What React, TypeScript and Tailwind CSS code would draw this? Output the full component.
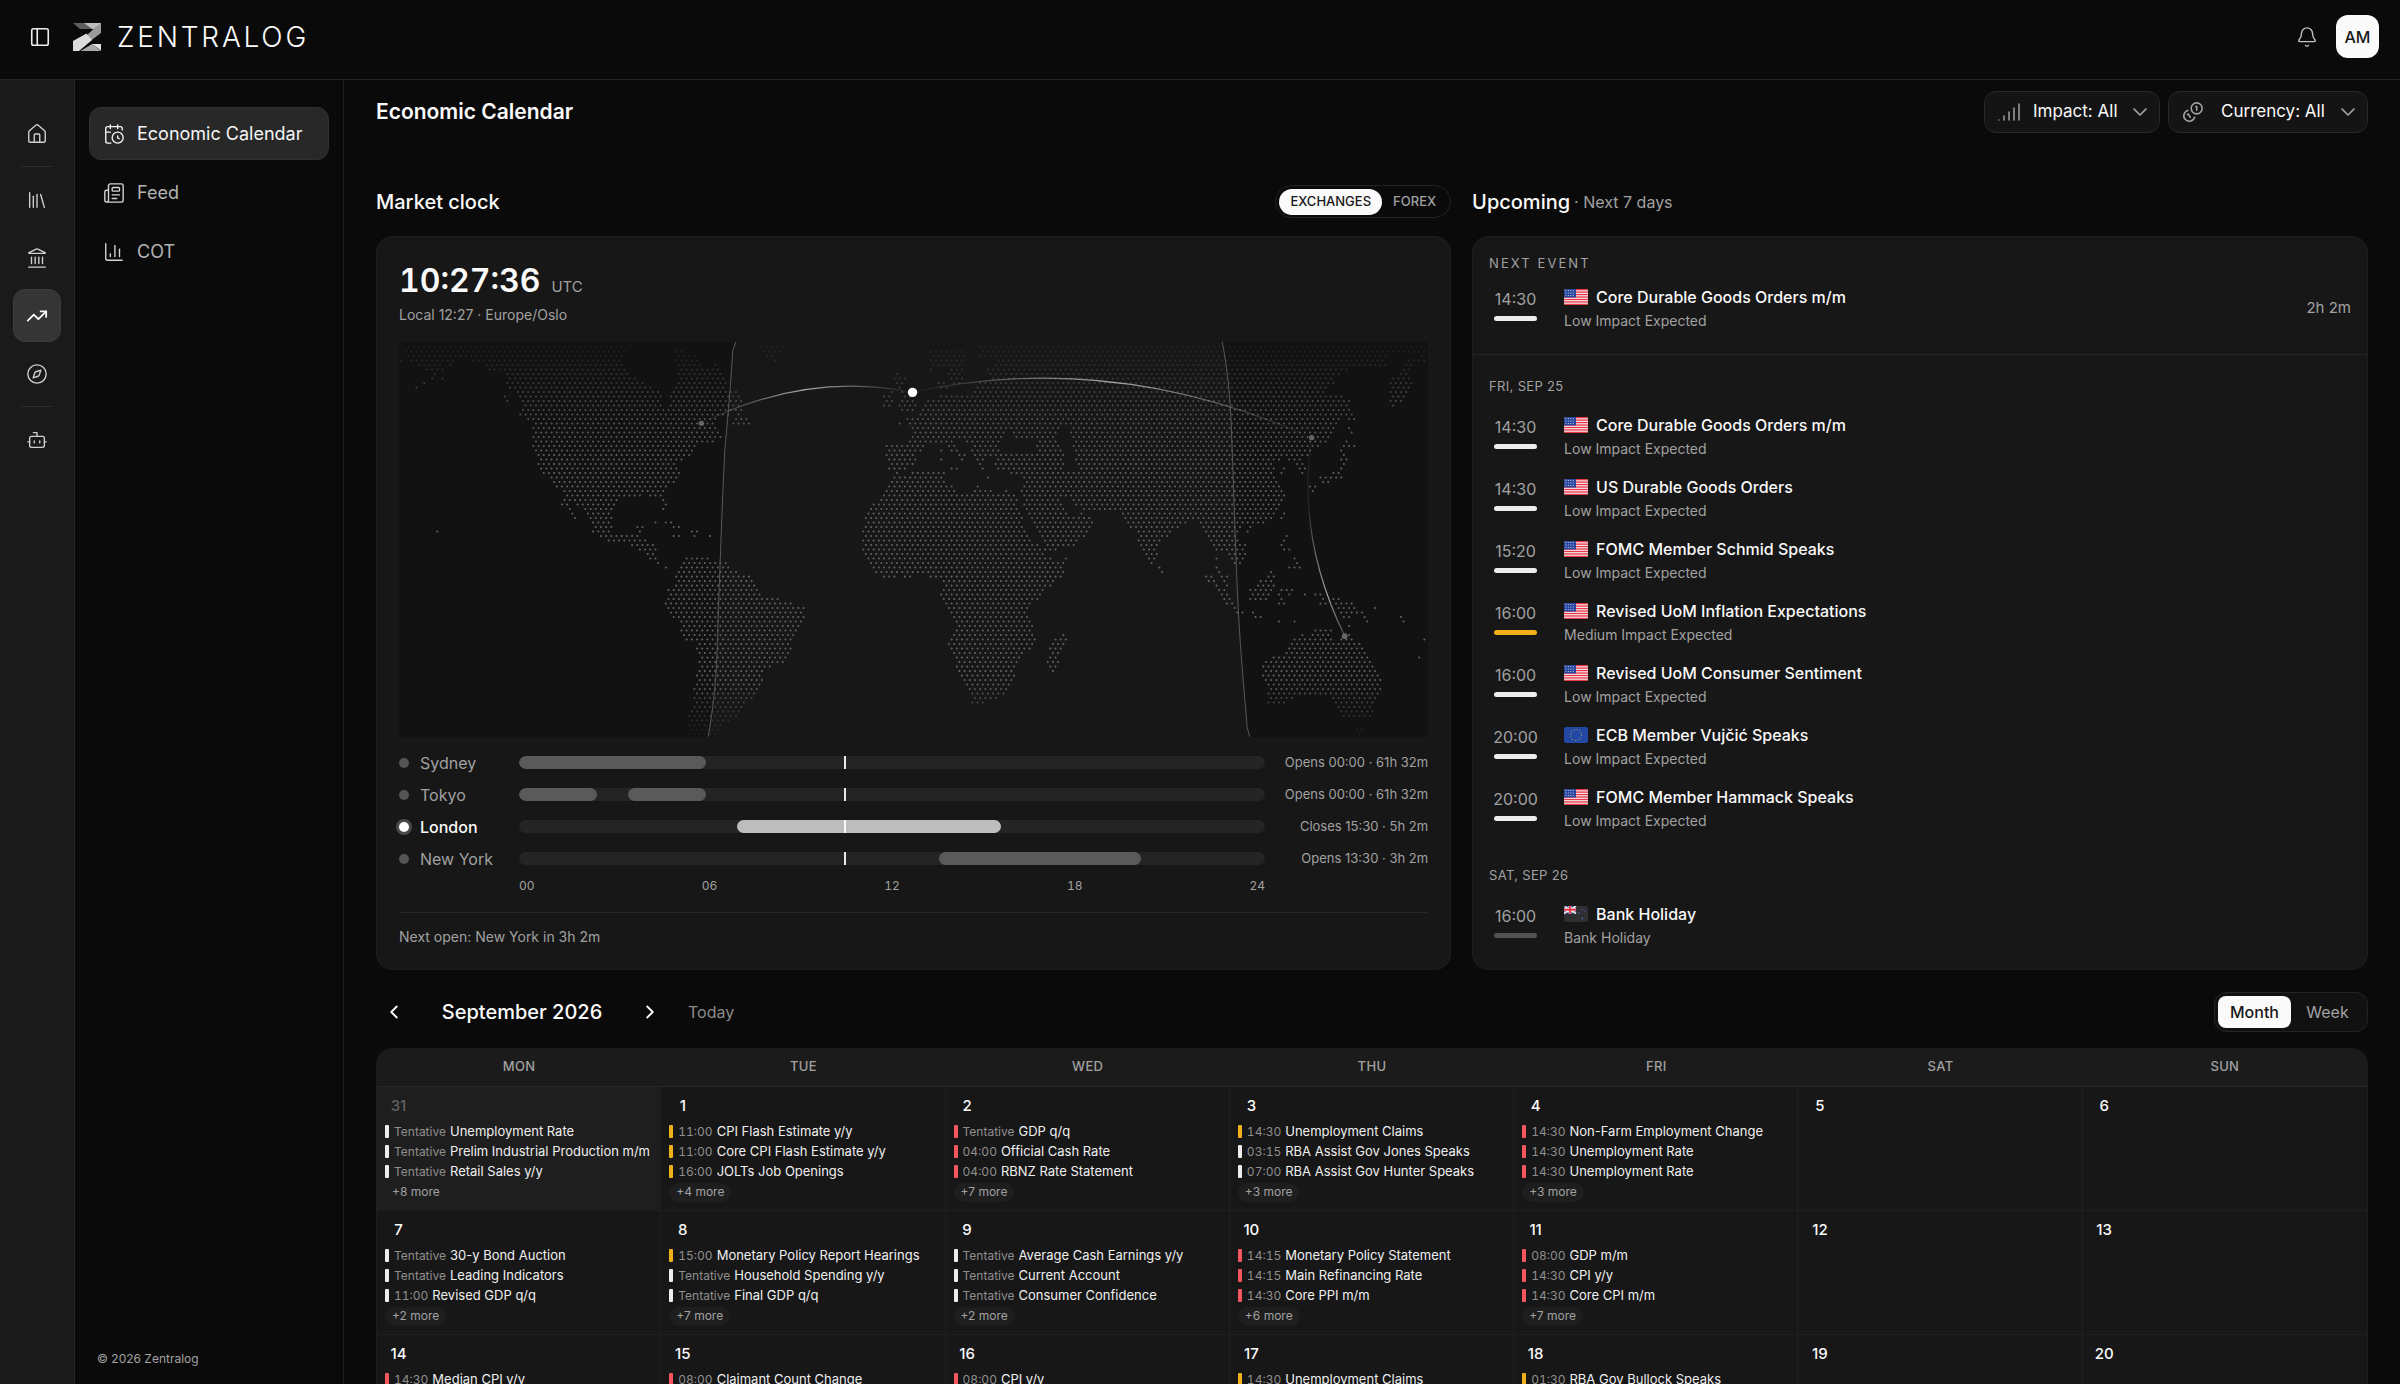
import { useState } from "react";
import {
  Bell,
  Bot,
  CalendarClock,
  ChartColumn,
  ChevronDown,
  ChevronLeft,
  ChevronRight,
  Compass,
  House,
  Landmark,
  Library,
  Newspaper,
  PanelLeft,
  Signal,
  TrendingUp,
} from "lucide-react";
import clsx from "clsx";

type Impact = "low" | "medium" | "high" | "holiday";
type Country = "us" | "eu" | "nz";
type Point = [number, number];

const impactColor: Record<Impact, string> = {
  low: "bg-[#ededed]",
  medium: "bg-[#efb01c]",
  high: "bg-[#f4565f]",
  holiday: "bg-[#525252]",
};

const impactLabel: Record<Impact, string> = {
  low: "Low Impact Expected",
  medium: "Medium Impact Expected",
  high: "High Impact Expected",
  holiday: "Bank Holiday",
};

/* ---------- Data ---------- */

const nextEvent = { time: "14:30", country: "us" as Country, title: "Core Durable Goods Orders m/m", impact: "low" as Impact };

const upcoming: { day: string; events: { time: string; country: Country; title: string; impact: Impact }[] }[] = [
  {
    day: "Fri, Sep 25",
    events: [
      { time: "14:30", country: "us", title: "Core Durable Goods Orders m/m", impact: "low" },
      { time: "14:30", country: "us", title: "US Durable Goods Orders", impact: "low" },
      { time: "15:20", country: "us", title: "FOMC Member Schmid Speaks", impact: "low" },
      { time: "16:00", country: "us", title: "Revised UoM Inflation Expectations", impact: "medium" },
      { time: "16:00", country: "us", title: "Revised UoM Consumer Sentiment", impact: "low" },
      { time: "20:00", country: "eu", title: "ECB Member Vujčić Speaks", impact: "low" },
      { time: "20:00", country: "us", title: "FOMC Member Hammack Speaks", impact: "low" },
    ],
  },
  {
    day: "Sat, Sep 26",
    events: [{ time: "16:00", country: "nz", title: "Bank Holiday", impact: "holiday" }],
  },
];

const NOW = 10.46;

const sessions: { city: string; open: boolean; hours: Point[]; status: string }[] = [
  { city: "Sydney", open: false, hours: [[0, 6]], status: "Opens 00:00 · 61h 32m" },
  { city: "Tokyo", open: false, hours: [[0, 2.5], [3.5, 6]], status: "Opens 00:00 · 61h 32m" },
  { city: "London", open: true, hours: [[7, 15.5]], status: "Closes 15:30 · 5h 2m" },
  { city: "New York", open: false, hours: [[13.5, 20]], status: "Opens 13:30 · 3h 2m" },
];

type Entry = [Impact, string, string];
type Day = { date: number; outside?: boolean; entries?: Entry[]; more?: number };

const weeks: Day[][] = [
  [
    {
      date: 31, outside: true, more: 8,
      entries: [["low", "Tentative", "Unemployment Rate"], ["low", "Tentative", "Prelim Industrial Production m/m"], ["low", "Tentative", "Retail Sales y/y"]],
    },
    {
      date: 1, more: 4,
      entries: [["medium", "11:00", "CPI Flash Estimate y/y"], ["medium", "11:00", "Core CPI Flash Estimate y/y"], ["medium", "16:00", "JOLTs Job Openings"]],
    },
    {
      date: 2, more: 7,
      entries: [["high", "Tentative", "GDP q/q"], ["high", "04:00", "Official Cash Rate"], ["high", "04:00", "RBNZ Rate Statement"]],
    },
    {
      date: 3, more: 3,
      entries: [["medium", "14:30", "Unemployment Claims"], ["low", "03:15", "RBA Assist Gov Jones Speaks"], ["low", "07:00", "RBA Assist Gov Hunter Speaks"]],
    },
    {
      date: 4, more: 3,
      entries: [["high", "14:30", "Non-Farm Employment Change"], ["high", "14:30", "Unemployment Rate"], ["high", "14:30", "Unemployment Rate"]],
    },
    { date: 5 },
    { date: 6 },
  ],
  [
    {
      date: 7, more: 2,
      entries: [["low", "Tentative", "30-y Bond Auction"], ["low", "Tentative", "Leading Indicators"], ["low", "11:00", "Revised GDP q/q"]],
    },
    {
      date: 8, more: 7,
      entries: [["medium", "15:00", "Monetary Policy Report Hearings"], ["low", "Tentative", "Household Spending y/y"], ["low", "Tentative", "Final GDP q/q"]],
    },
    {
      date: 9, more: 2,
      entries: [["low", "Tentative", "Average Cash Earnings y/y"], ["low", "Tentative", "Current Account"], ["low", "Tentative", "Consumer Confidence"]],
    },
    {
      date: 10, more: 6,
      entries: [["high", "14:15", "Monetary Policy Statement"], ["high", "14:15", "Main Refinancing Rate"], ["high", "14:30", "Core PPI m/m"]],
    },
    {
      date: 11, more: 7,
      entries: [["high", "08:00", "GDP m/m"], ["high", "14:30", "CPI y/y"], ["high", "14:30", "Core CPI m/m"]],
    },
    { date: 12 },
    { date: 13 },
  ],
  [
    { date: 14, entries: [["high", "14:30", "Median CPI y/y"]] },
    { date: 15, entries: [["high", "08:00", "Claimant Count Change"]] },
    { date: 16, entries: [["high", "08:00", "CPI y/y"]] },
    { date: 17, entries: [["medium", "14:30", "Unemployment Claims"]] },
    { date: 18, entries: [["medium", "01:30", "RBA Gov Bullock Speaks"]] },
    { date: 19 },
    { date: 20 },
  ],
];

/* ---------- Dotted world map ---------- */

// Outlines in [column, row] units of the dot grid. Overlapping outlines cut holes (Black Sea, Caspian).
const land: Point[][] = [
  // North America
  [[0.9, -0.5], [43.4, -0.5], [43, 2.1], [42.7, 3.5], [43.5, 5.4], [45.2, 6.8], [48.2, 8.9], [50, 10.2], [50.8, 13.7], [51.9, 13.7], [51.9, 11], [53, 8.4], [53.2, 5.8], [52.8, 0.5], [56.8, 1.7], [58.4, 5], [59.4, 5], [60.7, 3.8], [62.4, 6.8], [63, 9], [65, 9.8], [65.9, 11.6], [65.6, 14], [63, 15.2], [61.3, 15.3], [60.4, 16.8], [60.7, 18.7], [62, 19], [61.7, 20.4], [60.3, 21.4], [58.4, 21.2], [56.8, 22.2], [55.8, 24.2], [53.5, 25.4], [53.2, 26.8], [53.9, 28.2], [52.8, 30.3], [50.9, 31.4], [50.7, 33.2], [51.3, 35], [50.6, 36.4], [50, 34.6], [49.6, 33.2], [47.6, 33.2], [47.3, 32.4], [45.4, 33.4], [42.1, 33.6], [41.2, 35.4], [40.9, 37.6], [40.5, 39.8], [41.1, 41.6], [46.4, 41.4], [46.6, 42.8], [49.3, 43.8], [49, 45.4], [49.9, 48.4], [47.6, 47.2], [45.7, 44.7], [44, 43.9], [39.8, 43.4], [38.2, 42.2], [36.9, 41.2], [36.3, 39], [35.9, 37.6], [33.7, 35], [30.1, 31.3], [27.5, 28.4], [25.9, 24.7], [25.3, 22.1], [25.5, 17.7], [26.5, 16.3], [24.3, 16.2], [22.9, 15.1], [23.6, 13.6], [22.3, 11.4], [20.6, 8.4], [20, 6.5], [20.3, 5.4], [16.8, 5.3], [15.8, 3.6], [13.8, 3.4], [13.5, 2.5], [10.9, 3], [9.6, 4.2], [8.5, 3.6], [8.3, 5.4], [6.4, 6.2], [4.7, 5], [3.4, 4.2], [1.8, 3.2], [1, 2]],
  // South America
  [[55, 46.6], [58.4, 46.8], [62.6, 47.6], [63.9, 49.8], [67.1, 50.7], [69.1, 55], [71.7, 55.7], [75.3, 56.8], [77.9, 58], [77.7, 60.2], [75.6, 64.6], [74.9, 67.6], [74, 70.2], [71, 71.3], [69.7, 72.4], [69.4, 75], [67.8, 78.3], [65.8, 79.4], [64.9, 82], [62.9, 83.3], [61, 85.4], [60.3, 86.4], [55.1, 86.4], [55.4, 81.6], [56.4, 79.8], [56.4, 75.4], [57.3, 70.9], [57.3, 68], [56.4, 65.7], [54.8, 65], [53.2, 61.3], [50.8, 57.2], [51.5, 53.4], [52.8, 52.8], [53.1, 48.6]],
  // Africa
  [[95, 28.6], [94, 30.9], [92.8, 33.1], [90.9, 35], [89.4, 37.6], [88.8, 39.8], [88.8, 45], [89.9, 47.9], [91.5, 50.2], [92.8, 51.4], [95.4, 51.4], [96, 50.5], [97, 51.3], [101.6, 50.5], [102, 51.4], [103.9, 51.5], [104.5, 53.8], [103.8, 55], [104.9, 57.2], [105.9, 59], [106.9, 62], [106.3, 63.8], [105.3, 66], [106.3, 68.3], [106.9, 71.6], [108.2, 73.8], [109.6, 78.3], [109.9, 79.4], [111.2, 79.4], [115.2, 78.3], [117.5, 75.3], [118.2, 72.3], [119.2, 69.4], [120.8, 67.5], [122.2, 65.3], [121.8, 62.7], [120.8, 59], [120.8, 57.6], [123.5, 55.3], [125.1, 53.1], [127.1, 51.3], [128.3, 48], [128.1, 46.6], [126.5, 47.2], [124.5, 46.4], [122.8, 44.2], [121.2, 42], [119.8, 38.7], [118.8, 34.6], [118.8, 32.8], [116.2, 32.8], [113, 32.6], [107.9, 32.6], [106.3, 31], [104.6, 30], [104.9, 27.6], [99, 27.6], [97, 28.7]],
  // Eurasia
  [[93.3, 21.5], [97.6, 21.6], [98.4, 19.5], [97.3, 17.6], [97.3, 15.7], [100, 14.6], [101, 12.8], [101.6, 11.5], [103.9, 10.9], [110.2, 10.2], [110.9, 8.4], [111.9, 7.6], [113.5, 7.3], [112.9, 5], [114, 4], [115.8, 3.2], [113, 2.8], [111.5, 2], [111.4, -0.5], [197.5, -0.5], [197.3, 1.4], [190, 1.6], [189.7, 4.5], [182.8, 4.6], [182.4, 5.2], [180, 7], [179.7, 8.4], [178, 9.5], [178, 10.6], [181.4, 10.6], [182.8, 11.7], [183.1, 14], [184, 16.2], [183, 16.6], [181.4, 15.5], [180.4, 17.8], [178.4, 20.9], [177.2, 22.3], [175.4, 22.3], [174.8, 24.2], [172.8, 24.3], [173.4, 25.2], [174.2, 26], [174.2, 27.5], [174.8, 29.4], [173.8, 28.6], [172.5, 26.2], [171.8, 25.4], [169.5, 24.6], [168.2, 25.7], [168.2, 28.7], [169.2, 29.8], [170.3, 33.1], [169.2, 36.5], [167.8, 38.2], [165.2, 39.4], [163, 39.4], [161.2, 40.5], [161.2, 42.4], [162.5, 43.5], [162.7, 45.7], [162.2, 47.6], [160.7, 48.5], [159.6, 46.4], [158.6, 45.3], [156.6, 45.3], [155.9, 43.5], [154.6, 42], [153.6, 40.2], [152.6, 38], [151.6, 39.2], [149.7, 40.4], [147.8, 42], [146, 43.5], [145.6, 46.4], [144.7, 48.5], [143.3, 45.7], [141.8, 43.1], [141.7, 40.9], [140, 39.8], [139, 37.6], [137.4, 36.6], [132, 36.5], [129.8, 35.4], [128.3, 33.7], [127, 33.1], [129.1, 37.6], [130.4, 37.8], [131.1, 36.5], [133.4, 38.7], [132.4, 41.3], [129.8, 43.9], [126.1, 45.3], [124.1, 45.3], [123.1, 42.7], [121.8, 39.8], [120.8, 36.8], [119.8, 34.6], [119.3, 31.7], [119.8, 29.8], [119.8, 28.6], [117.2, 28.2], [117.2, 27.4], [114.9, 27.4], [114.2, 26], [114.2, 24.3], [112, 24.5], [112.5, 27.4], [111.8, 27.3], [110.4, 24.3], [109.6, 21.7], [107.5, 20.6], [107, 20], [106.2, 20.4], [106.2, 21.4], [100.9, 21.5], [101, 22.3], [99.3, 23.9], [98.8, 26.2], [97, 27.4], [95.5, 28.3], [94, 27.3], [93.4, 24.3]],
  // Black Sea, Caspian Sea
  [[116.2, 18.6], [118, 19], [118.6, 20.5], [122.2, 21], [122.5, 23.6], [115.2, 23.6], [114.8, 22.2], [115.8, 20.5]],
  [[127.3, 17.8], [128.9, 17.8], [129, 20.5], [129.8, 25.7], [130.3, 27.4], [127.5, 27.4], [127.8, 24], [126.8, 21.5], [126.2, 20]],
  // Scandinavia
  [[101.6, 0.5], [109, 0.5], [108.4, 3.4], [108.4, 5.2], [108, 8.4], [106.5, 8.4], [105.2, 6.5], [106, 4.5], [103, 4.2], [103, 5.4], [101.7, 5.4]],
  // Kamchatka
  [[194, 2.4], [197.4, 1.6], [197.4, 3.4], [194.8, 4.2], [194, 6.5], [195.3, 8.1], [193.6, 11], [191.2, 13.5], [190.3, 12], [190.3, 7.6], [193, 4.6]],
  // Borneo
  [[167.5, 49.6], [168.5, 51], [168, 55], [166.8, 56.3], [163.2, 56.4], [162.9, 53.8], [164.8, 53.3], [165.8, 51.4]],
  // Madagascar
  [[127.4, 63.5], [128.4, 65], [126.8, 69.4], [125.7, 72.3], [124.4, 70.5], [124.8, 66], [127, 64]],
  // Australia
  [[175.4, 62.6], [179.3, 62.6], [178.6, 64.5], [179.7, 65.4], [181, 64.6], [182.2, 63.2], [183, 63.8], [184, 65], [185.7, 67.6], [187, 70.1], [188.7, 73.4], [188.7, 76.4], [187.7, 79], [186.7, 82.3], [181.4, 82.2], [180, 79.4], [178, 77.5], [172, 77.5], [171.5, 78.5], [169.2, 79.4], [166.7, 79.4], [166.6, 76], [165.8, 73.4], [165.8, 70.9], [167.2, 68.8], [170.1, 68.3], [171.8, 65], [173.4, 63.6], [175.1, 64.6]],
];

// Small islands, listed as row -> columns
const islands: [number, number[]][] = [
  [0, [69.5, 70.5, 71.5, 72.5]], [1, [70, 71, 72, 73]], [2, [70.5, 71.5]], [3, [0, 72]],
  [5, [8]], [6, [6.5, 95.5]], [7, [6, 8, 95, 96, 97]], [8, [4.5, 95.5, 96.5, 103.5, 104.5]], [9, [3, 96, 104, 105]],
  [10, [94.5, 96.5]], [11, [20, 93, 94, 97, 98]], [12, [20.5, 93.5, 94.5, 96.5, 97.5, 98.5]], [13, [93, 94, 96, 97, 98, 99]],
  [14, [96.5, 97.5, 98.5]], [15, [65]], [16, [64.5, 65.5, 66.5]], [17, [64, 65, 66, 67, 96]],
  [18, [182.5]], [19, [183]], [21, [182]], [22, [105.5, 106.5, 181.5, 182.5, 183.5]], [23, [104, 106, 107, 181]],
  [24, [107.5, 108.5, 181.5]], [25, [104, 108, 181, 182]], [26, [181.5]], [27, [106, 107, 170, 181]],
  [28, [169.5, 179.5, 180.5]], [29, [113, 177, 178, 179, 180, 181]], [30, [177.5, 178.5]], [31, [111, 175, 176]],
  [32, [110.5, 111.5, 112.5, 113.5, 116.5, 175.5]], [34, [31.5, 32.5]], [35, [31, 32]], [36, [32.5]], [37, [33, 170]], [38, [33.5, 169.5]],
  [39, [49, 51, 52]], [40, [45.5, 46.5, 52.5, 53.5, 163.5]], [41, [7, 46, 56, 57, 163]], [42, [52.5, 53.5, 56.5, 59.5, 170.5]],
  [43, [170]], [44, [169.5]], [45, [170, 171]], [47, [157, 172]], [48, [172.5]], [49, [51, 146, 157, 171, 172, 173]],
  [50, [146.5, 157.5]], [51, [155, 156, 158, 159]], [52, [155.5, 156.5, 158.5]], [53, [157, 159]], [54, [157.5, 158.5, 169.5, 170.5, 171.5]],
  [55, [158, 159, 169, 171, 174, 176, 177]], [56, [158.5, 159.5, 169.5, 177.5, 179.5, 180.5]], [57, [159, 160, 169, 170, 177, 178, 180, 181, 182, 183]],
  [58, [160.5, 180.5, 181.5, 182.5, 183.5, 187.5]], [59, [161, 162, 164, 181, 182, 183, 184, 185]], [60, [164.5, 165.5, 181.5, 182.5, 185.5, 192.5]],
  [61, [169, 172, 186, 193]], [62, [182.5]], [65, [197]], [69, [196]], [85, [184, 185]], [86, [184.5]],
];

const COL = 5.2;
const ROW = 4.505;

function isLand(x: number, y: number) {
  let inside = false;
  for (const ring of land) {
    for (let i = 0, j = ring.length - 1; i < ring.length; j = i++) {
      const [xi, yi] = ring[i];
      const [xj, yj] = ring[j];
      if (yi > y !== yj > y && x < ((xj - xi) * (y - yi)) / (yj - yi) + xi) inside = !inside;
    }
  }
  return inside;
}

function buildDots() {
  const dot = (c: number, r: number) => `M${(1.9 + c * COL).toFixed(1)} ${(5 + r * ROW).toFixed(1)}h0`;
  const out: string[] = [];
  for (let r = 0; r < 87; r++) {
    for (let i = 0; i < 198; i++) {
      const c = r % 2 ? i : i + 0.5;
      if (isLand(c, r)) out.push(dot(c, r));
    }
  }
  for (const [r, cols] of islands) for (const c of cols) out.push(dot(c, r));
  return out.join("");
}

const dots = buildDots();

const dusk = "M337 0L334 9C331 60 327 95 326 110C323 170 322 210 319.500 271C318 330 317 350 309.500 395";
const dawn = "M824 0C829 25 832 55 833 84C836 160 837 200 838.500 234C841 300 846 350 849 386L851.500 395";

function WorldMap() {
  return (
    <svg viewBox="0 0 1030 395" className="mt-[17px] block w-full" role="img" aria-label="World map with market locations">
      <defs>
        <linearGradient id="fade" x1="0" y1="0" x2="0" y2="1">
          <stop offset="0" stopColor="#fff" stopOpacity="0.1" />
          <stop offset="0.18" stopColor="#fff" stopOpacity="0.8" />
          <stop offset="0.3" stopColor="#fff" />
          <stop offset="0.85" stopColor="#fff" />
          <stop offset="1" stopColor="#fff" stopOpacity="0.1" />
        </linearGradient>
        <mask id="map-mask">
          <rect width="1030" height="395" fill="url(#fade)" />
        </mask>
        <linearGradient id="arc" x1="0" x2="1" y1="0" y2="0">
          <stop offset="0" stopColor="#ccc" stopOpacity="0" />
          <stop offset="0.5" stopColor="#ccc" stopOpacity="0.8" />
          <stop offset="1" stopColor="#ccc" stopOpacity="0" />
        </linearGradient>
        <linearGradient id="arc-down" x1="0" x2="0" y1="0" y2="1">
          <stop offset="0" stopColor="#ccc" stopOpacity="0.05" />
          <stop offset="0.35" stopColor="#ccc" stopOpacity="0.12" />
          <stop offset="0.8" stopColor="#ccc" stopOpacity="0.8" />
          <stop offset="1" stopColor="#ccc" stopOpacity="0.3" />
        </linearGradient>
      </defs>
      {/* night side */}
      <path d={`${dusk}H0V0Z`} fill="#0a0a0a" fillOpacity="0.35" />
      <path d={`${dawn}H1030V0Z`} fill="#0a0a0a" fillOpacity="0.35" />
      <path d={dots} stroke="#626262" strokeWidth="2.1" strokeLinecap="round" mask="url(#map-mask)" />
      <path d={dusk} fill="none" stroke="#585858" />
      <path d={dawn} fill="none" stroke="#585858" />
      <g fill="none" strokeWidth="1.2">
        <path d="M302.700 81.400Q408 29 514 50.400" stroke="url(#arc)" />
        <path d="M514 50.400Q714 7 913.500 95.700" stroke="url(#arc)" />
        <path d="M913.500 95.700Q898 195 946.600 294.400" stroke="url(#arc-down)" />
      </g>
      <g fill="#666">
        <circle cx="302.700" cy="81.400" r="2.700" />
        <circle cx="913.500" cy="95.700" r="2.700" />
        <circle cx="946.600" cy="294.400" r="2.900" />
      </g>
      <circle cx="514" cy="50.400" r="4.700" fill="#fff" />
    </svg>
  );
}

/* ---------- Small drawings ---------- */

function Logo() {
  return (
    <svg viewBox="0 0 28 28" className="size-7" aria-hidden="true">
      <path d="M0 0H12L21 6H7Z" fill="#5e5e5e" />
      <path d="M11 0H28V1L20 6.500Z" fill="#bdbdbd" />
      <path d="M28 0V10L16 19L13 13L20 6.500Z" fill="#9b9b9b" />
      <path d="M0 18L13.500 10.500L19 17L6 28H0Z" fill="#dcdcdc" />
      <path d="M7.500 28L19 21L28 28Z" fill="#a8a8a8" />
      <path d="M19 21H28V27.500Z" fill="#e2e2e2" />
    </svg>
  );
}

function CoinsIcon() {
  return (
    <svg viewBox="0 0 24 24" className="size-[22px] text-[#a1a1a1]" fill="none" stroke="currentColor" strokeWidth="1.750" strokeLinecap="round" strokeLinejoin="round" aria-hidden="true">
      <path d="M13.744 17.736a6 6 0 1 1-7.480-7.480" />
      <path d="M15 6h1v4" />
      <path d="m6.134 14.768.866-.5 2 3.464" />
      <circle cx="16" cy="8" r="6" />
    </svg>
  );
}

function Flag({ country }: { country: Country }) {
  return (
    <svg viewBox="0 0 24 16" className="h-4 w-6 shrink-0 rounded-[2px]" aria-hidden="true">
      {country === "us" && (
        <>
          <rect width="24" height="16" fill="#f4f4f4" />
          {[0, 1, 2, 3, 4, 5, 6].map((i) => (
            <rect key={i} y={i * 2.46} width="24" height="1.330" fill="#ee3448" />
          ))}
          <rect width="12" height="8.500" fill="#2a48a0" />
          {[1.5, 4, 6.5].map((y) => (
            <path key={y} d={`M1.500 ${y}H11`} stroke="#b9c3e0" strokeWidth="1" strokeDasharray="1 1.400" />
          ))}
        </>
      )}
      {country === "eu" && (
        <>
          <rect width="24" height="16" fill="#2347a5" />
          <circle cx="12" cy="8" r="5.500" fill="none" stroke="#9c9763" strokeWidth="1.100" strokeDasharray="1 1.880" />
        </>
      )}
      {country === "nz" && (
        <>
          <rect width="24" height="16" fill="#2f2f31" />
          <rect width="12" height="7.500" fill="#3c4f96" />
          <path d="M0 0L12 7.500M12 0L0 7.500" stroke="#f0f0f0" strokeWidth="1.500" />
          <path d="M0 3.750H12M6 0V7.500" stroke="#f4f4f4" strokeWidth="3" />
          <path d="M0 3.750H12M6 0V7.500" stroke="#ee3448" strokeWidth="1.800" />
          <path d="M17.500 3.500h1M14.500 7h1M20.500 5.500h1M17.500 12.500h1.500" stroke="#4565c8" strokeWidth="1.500" />
        </>
      )}
    </svg>
  );
}

/* ---------- Shell ---------- */

const railItems = [
  { label: "Home", icon: House },
  null,
  { label: "Library", icon: Library },
  { label: "Institutions", icon: Landmark },
  { label: "Markets", icon: TrendingUp, active: true },
  { label: "Explore", icon: Compass },
  null,
  { label: "Assistant", icon: Bot },
];

const navItems = [
  { label: "Economic Calendar", icon: CalendarClock, active: true },
  { label: "Feed", icon: Newspaper },
  { label: "COT", icon: ChartColumn },
];

function TopBar() {
  return (
    <header className="flex h-20 shrink-0 items-start justify-between border-b border-[#242424] pt-[15px] pr-[21px] pl-[29px]">
      <div className="flex h-[43px] items-center">
        <button type="button" aria-label="Toggle sidebar" className="text-[#ededed]">
          <PanelLeft size={22} strokeWidth={1.75} />
        </button>
        <a href="#" className="ml-[22px] flex items-center gap-4 text-[28px] leading-8 font-light tracking-[0.1em] text-[#fafafa]">
          <Logo />
          ZENTRALOG
        </a>
      </div>
      <div className="flex items-center gap-[18px]">
        <button type="button" aria-label="Notifications" className="text-[#c4c4c4]">
          <Bell size={22} strokeWidth={1.5} />
        </button>
        <button type="button" className="size-[43px] rounded-xl bg-[#fafafa] text-base font-medium text-[#171717]">
          AM
        </button>
      </div>
    </header>
  );
}

function Rail() {
  return (
    <nav aria-label="Primary" className="flex w-[75px] shrink-0 flex-col items-center gap-[5px] border-r border-[#262626] bg-[#1a1a1a] pt-[27px]">
      {railItems.map((item, i) =>
        item ? (
          <a
            key={item.label}
            href="#"
            aria-label={item.label}
            className={clsx(
              "flex h-[53px] w-12 items-center justify-center rounded-xl",
              item.active ? "border border-[#3c3c3c] bg-[#353535] text-[#fafafa]" : "text-[#d0d0d0]",
            )}
          >
            <item.icon size={22} strokeWidth={item.active ? 2 : 1.5} />
          </a>
        ) : (
          <hr key={i} className="my-px w-8 border-[#2c2c2c]" />
        ),
      )}
    </nav>
  );
}

function SubNav() {
  return (
    <aside className="flex w-[269px] shrink-0 flex-col justify-between border-r border-[#1f1f1f] px-[14px] pt-[27px] pb-[17px]">
      <nav aria-label="Markets" className="flex flex-col gap-1.5">
        {navItems.map(({ label, icon: Icon, active }) => (
          <a
            key={label}
            href="#"
            className={clsx(
              "flex h-[53px] items-center gap-3 rounded-xl px-[13px] text-lg",
              active ? "border border-[#303030] bg-[#282828] text-[#f5f5f5]" : "border border-transparent text-[#b4b4b4]",
            )}
          >
            <Icon size={22} strokeWidth={1.5} className={active ? "text-[#f5f5f5]" : "text-[#d4d4d4]"} />
            {label}
          </a>
        ))}
      </nav>
      <p className="px-2 text-xs leading-4 text-[#a1a1a1]">© 2026 Zentralog</p>
    </aside>
  );
}

/* ---------- Market clock ---------- */

function MarketClock() {
  const [view, setView] = useState("Exchanges");
  return (
    <section className="flex flex-col">
      <div className="flex h-[33px] items-center justify-between">
        <h2 className="text-xl font-medium">Market clock</h2>
        <div className="flex h-[33px] items-center rounded-full border border-[#222] p-[3px]">
          {["Exchanges", "Forex"].map((v) => (
            <button
              key={v}
              type="button"
              aria-pressed={view === v}
              onClick={() => setView(v)}
              className={clsx(
                "h-[26px] rounded-full px-[11px] text-[13px] font-medium uppercase",
                view === v ? "bg-[#fafafa] text-[#171717]" : "text-[#a1a1a1]",
              )}
            >
              {v}
            </button>
          ))}
        </div>
      </div>
      <div className="mt-[18px] flex-1 rounded-2xl border border-[#1e1e1e] bg-[#171717] px-[22px] pt-6 pb-[22px]">
        <div className="flex h-10 items-baseline gap-[11px]">
          <span className="text-[32px] leading-10 font-semibold tabular-nums">10:27:36</span>
          <span className="text-[15px] leading-5 text-[#a1a1a1]">UTC</span>
        </div>
        <p className="mt-1 text-sm leading-5 text-[#a1a1a1]">Local 12:27 · Europe/Oslo</p>
        <WorldMap />
        <div className="mt-4 flex flex-col gap-3">
          {sessions.map((s) => (
            <div key={s.city} className="flex h-5 items-center">
              <div className={clsx("flex w-[120px] items-center gap-[11px] text-base", s.open ? "font-medium" : "text-[#a1a1a1]")}>
                <span className={clsx("size-[10px] rounded-full", s.open ? "bg-white ring-3 ring-[#4a4a4a]" : "bg-[#545454]")} />
                {s.city}
              </div>
              <div className="relative h-[13px] flex-1 overflow-hidden rounded-full bg-[#242424]">
                {s.hours.map(([from, to]) => (
                  <span
                    key={from}
                    className={clsx("absolute inset-y-0 rounded-full", s.open ? "bg-[#bdbdbd]" : "bg-[#5a5a5a]")}
                    style={{ left: `${(from / 24) * 100}%`, width: `${((to - from) / 24) * 100}%` }}
                  />
                ))}
                <span className="absolute inset-y-0 w-[2px] bg-white/90" style={{ left: `${(NOW / 24) * 100}%` }} />
              </div>
              <span className="w-[163px] text-right text-[13px] text-[#a1a1a1]">{s.status}</span>
            </div>
          ))}
        </div>
        <div className="mt-[9px] mr-[163px] ml-[120px] flex justify-between text-xs leading-4 text-[#a1a1a1] tabular-nums">
          {["00", "06", "12", "18", "24"].map((h) => (
            <span key={h}>{h}</span>
          ))}
        </div>
        <p className="mt-[18px] border-t border-[#262626] pt-[14px] text-sm leading-5 text-[#a1a1a1]">Next open: New York in 3h 2m</p>
      </div>
    </section>
  );
}

/* ---------- Upcoming ---------- */

function EventRow({ time, country, title, impact, countdown }: { time: string; country: Country; title: string; impact: Impact; countdown?: string }) {
  return (
    <div className="flex h-[47px] items-center gap-[27px] pl-[5px]">
      <div className="flex w-[43px] flex-col items-center gap-[5px] self-start pt-0.5">
        <span className="text-base leading-6 text-[#a1a1a1]">{time}</span>
        <span className={clsx("h-[5px] w-full rounded-full", impactColor[impact])} />
      </div>
      <div className="min-w-0 flex-1 self-start">
        <p className="flex items-center gap-2 text-base leading-6 font-medium">
          <Flag country={country} />
          {title}
        </p>
        <p className="mt-0.5 text-sm leading-5 text-[#a1a1a1]">{impactLabel[impact]}</p>
      </div>
      {countdown && <span className="text-[15px] text-[#a1a1a1]">{countdown}</span>}
    </div>
  );
}

function Upcoming() {
  return (
    <section className="flex flex-col">
      <h2 className="flex h-[33px] items-center gap-1 text-xl font-medium">
        Upcoming <span className="text-base font-normal text-[#a1a1a1]">· Next 7 days</span>
      </h2>
      <div className="mt-[18px] flex-1 rounded-2xl border border-[#1e1e1e] bg-[#171717]">
        <div className="border-b border-[#262626] px-4 pt-[18px] pb-[22px]">
          <h3 className="mb-[14px] text-[13px] leading-4 tracking-[0.16em] text-[#a1a1a1] uppercase">Next event</h3>
          <EventRow {...nextEvent} countdown="2h 2m" />
        </div>
        {upcoming.map((group, i) => (
          <div key={group.day} className={clsx("px-4", i === 0 ? "pt-[23px]" : "pt-[35px]")}>
            <h3 className="mb-[19px] text-[13px] leading-4 tracking-wide text-[#a1a1a1] uppercase">{group.day}</h3>
            <div className="flex flex-col gap-[15px]">
              {group.events.map((e) => (
                <EventRow key={e.title} {...e} />
              ))}
            </div>
          </div>
        ))}
      </div>
    </section>
  );
}

/* ---------- Month calendar ---------- */

function DayCell({ day }: { day: Day }) {
  return (
    <td className={clsx("h-[124px] border-r border-b border-[#1f1f1f] px-2 pt-[9px] pb-2 align-top last:border-r-0", day.outside && "bg-[#1e1e1e]")}>
      <div className={clsx("w-[27px] text-center text-[15px] leading-5 font-medium", day.outside ? "text-[#616161]" : "text-[#fafafa]")}>{day.date}</div>
      <div className="mt-1.5">
        {day.entries?.map(([impact, time, title], i) => (
          <div key={i} className="flex h-5 items-center text-[13px] whitespace-nowrap">
            <span className={clsx("mr-[5px] h-[13px] w-1 shrink-0 rounded-[1px]", impactColor[impact])} />
            <span className="mr-1 text-xs text-[#8f8f8f] tabular-nums">{time}</span>
            <span className="truncate text-[#f0f0f0]">{title}</span>
          </div>
        ))}
      </div>
      {day.more && (
        <button type="button" className="mt-px block h-[19px] rounded-full bg-[#1e1e1e] px-[7px] text-xs leading-4 text-[#a1a1a1]">
          +{day.more} more
        </button>
      )}
    </td>
  );
}

function Calendar() {
  const [mode, setMode] = useState("Month");
  return (
    <section className="mt-[22px]">
      <div className="flex h-10 items-center">
        <button type="button" aria-label="Previous month" className="flex size-9 items-center justify-center">
          <ChevronLeft size={22} />
        </button>
        <h2 className="w-[220px] text-center text-xl font-medium">September 2026</h2>
        <button type="button" aria-label="Next month" className="flex size-9 items-center justify-center">
          <ChevronRight size={22} />
        </button>
        <button type="button" className="ml-5 text-base text-[#8a8a8a]">
          Today
        </button>
        <div className="ml-auto flex h-10 items-center rounded-xl border border-[#242424] bg-[#111] p-[3px]">
          {["Month", "Week"].map((m) => (
            <button
              key={m}
              type="button"
              aria-pressed={mode === m}
              onClick={() => setMode(m)}
              className={clsx("h-8 w-[73px] rounded-lg text-base", mode === m ? "bg-[#fafafa] font-medium text-[#171717]" : "text-[#a1a1a1]")}
            >
              {m}
            </button>
          ))}
        </div>
      </div>
      <div className="mt-4 overflow-hidden rounded-t-2xl border border-[#1e1e1e] bg-[#171717]">
        <table className="w-full table-fixed border-separate border-spacing-0">
          <thead>
            <tr className="bg-[#1b1b1b]">
              {["Mon", "Tue", "Wed", "Thu", "Fri", "Sat", "Sun"].map((d) => (
                <th key={d} scope="col" className="h-[38px] border-b border-[#262626] text-[13px] font-medium tracking-wide text-[#a1a1a1] uppercase">
                  {d}
                </th>
              ))}
            </tr>
          </thead>
          <tbody>
            {weeks.map((week) => (
              <tr key={week[0].date}>
                {week.map((day) => (
                  <DayCell key={day.date} day={day} />
                ))}
              </tr>
            ))}
          </tbody>
        </table>
      </div>
    </section>
  );
}

/* ---------- Page ---------- */

export default function App() {
  return (
    <div className="flex h-screen flex-col overflow-hidden bg-[#0a0a0a] font-[Inter,sans-serif] text-[#fafafa] antialiased">
      <TopBar />
      <div className="flex min-h-0 flex-1">
        <Rail />
        <SubNav />
        <main className="min-w-0 flex-1 overflow-hidden px-8 pt-[11px]">
          <div className="flex items-center justify-between">
            <h1 className="text-[21px] font-semibold">Economic Calendar</h1>
            <div className="flex gap-2">
              <label className="flex h-[42px] items-center rounded-xl border border-[#282828] bg-[#141414] pr-[7px] pl-3">
                <Signal size={24} strokeWidth={1.5} className="text-[#a1a1a1]" />
                <select aria-label="Impact" className="ml-3 w-[95px] appearance-none bg-transparent text-[17px] outline-none">
                  <option>Impact: All</option>
                  <option>Impact: High</option>
                </select>
                <ChevronDown size={24} strokeWidth={1.75} className="text-[#a1a1a1]" />
              </label>
              <label className="flex h-[42px] items-center rounded-xl border border-[#282828] bg-[#141414] pr-[7px] pl-[13px]">
                <CoinsIcon />
                <select aria-label="Currency" className="ml-[17px] w-[115px] appearance-none bg-transparent text-[17px] outline-none">
                  <option>Currency: All</option>
                  <option>Currency: USD</option>
                </select>
                <ChevronDown size={24} strokeWidth={1.75} className="text-[#a1a1a1]" />
              </label>
            </div>
          </div>
          <div className="mt-[52px] grid grid-cols-[6fr_5fr] gap-[21px]">
            <MarketClock />
            <Upcoming />
          </div>
          <Calendar />
        </main>
      </div>
    </div>
  );
}
